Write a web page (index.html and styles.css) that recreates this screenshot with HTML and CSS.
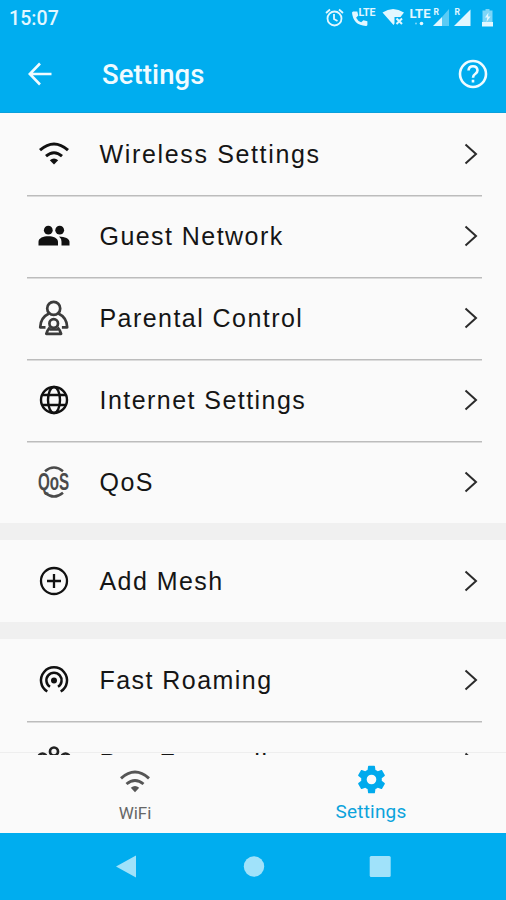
FILE: index.html
```html
<!DOCTYPE html>
<html lang="en">
<head>
<meta charset="utf-8">
<title>Settings</title>
<link rel="stylesheet" href="styles.css">
</head>
<body>
<div class="screen">
  <header class="top">
    <div class="status">
      <span class="clock">15:07</span>
      <svg class="status-icons" width="180" height="36" viewBox="320 0 180 36" fill="#e2f7ff">
        <g fill="none" stroke="#e2f7ff" stroke-width="1.8"><circle cx="334.500" cy="18.500" r="7"/><path d="M334 14v5l3.500 2M326 13l4-3.500M343 13l-4-3.500"/></g>
        <path d="M353 11.500h4.300l1 4-2.200 2.200q1.900 3.600 5.100 4.600l2.200-2 4 1v3.400q0 1.300-1.500 1.300Q353 25 352 12.500Z"/>
        <text class="badge" x="358.500" y="16" font-size="10" textLength="17" lengthAdjust="spacingAndGlyphs">LTE</text>
        <path d="M382.500 12.500Q393 5.500 404 12.500l-3.500 4.500h-6v6.500l-1 1.500Z"/><path d="M396.500 18.500l5.500 5.500m0-5.500l-5.500 5.500" stroke="#e2f7ff" stroke-width="2"/>
        <text class="badge" x="409.500" y="18" font-size="13.500" textLength="21" lengthAdjust="spacingAndGlyphs">LTE</text>
        <circle cx="416" cy="23.500" r=".9" opacity=".6"/><circle cx="421.500" cy="23.500" r="1.800"/>
        <text class="badge" x="433.500" y="14.500" font-size="8.500">R</text>
        <path d="M433 26l9-9v9Z"/><path d="M442 17l7-8v17h-7Z" opacity=".4"/>
        <text class="badge" x="454.500" y="14.500" font-size="8.500">R</text>
        <path d="M454 26l16.500-16.500V26Z"/>
        <path d="M485.500 9h4v1.500h3V22h-10V10.500h3Z" opacity=".55"/><path d="M482 22h11v4.500h-11ZM488.500 12.500l-3.500 5h2.300l-.8 4.500 4-5.500h-2.500Z"/>
      </svg>
    </div>
    <div class="appbar">
      <svg class="back" width="24" height="24" viewBox="0 0 24 24"><path d="M12 1.500L1.800 12 12 22.500M2 12h21.500"/></svg>
      <h1 class="title">Settings</h1>
      <svg class="help" width="30" height="30" viewBox="0 0 30 30"><circle cx="15" cy="15" r="13"/><path d="M10.500 11.500q.4-4.200 4.500-4.200t4.500 4q0 1.900-2.100 3.500Q15 16.500 15 18.700M15 20.700v2.800"/></svg>
    </div>
  </header>

  <main class="list">
    <section class="group">
      <div class="row"><svg class="icon" viewBox="0 0 36 36"><g fill="none" stroke="#111" stroke-width="3"><path d="M4 14.200Q18 1.800 32 14.200"/><path d="M10 20.200q8-6.800 16 0"/></g><path d="M13.800 24.200q4.200-3.200 8.400 0L18 28.500Z"/></svg><span class="label label-loose">Wireless Settings</span><svg class="chevron" viewBox="0 0 14 22"><path d="M1.500 1.500L12 11 1.500 20.500"/></svg></div>
      <div class="row"><svg class="icon" viewBox="0 0 36 36"><circle cx="12.300" cy="12.200" r="4.400"/><circle cx="23.700" cy="12.200" r="4.400"/><path d="M2.500 27.500v-3.700c0-7.300 19.500-7.300 19.500 0v3.700ZM23 18.400c6 .3 10.500 2 10.500 5.400v3.700h-8v-3.700q0-3.500-2.500-5.400Z"/></svg><span class="label">Guest Network</span><svg class="chevron" viewBox="0 0 14 22"><path d="M1.500 1.500L12 11 1.500 20.500"/></svg></div>
      <div class="row"><svg class="icon" viewBox="0 0 36 36"><g fill="none" stroke="#3b3b3b" stroke-width="2.700" stroke-linejoin="round"><circle cx="17.700" cy="8.400" r="6.500"/><path d="M13 13.500Q4.500 17.500 4.200 27.300h5.300M22.400 13.500Q30.900 17.500 31.200 27.300h-5.300"/><circle cx="17.700" cy="23.500" r="4.300"/><path d="M13.800 27.300q-2.500 2.800-3.500 6.500h14.800q-1-3.700-3.500-6.500M13.500 29.500h8.400"/></g></svg><span class="label">Parental Control</span><svg class="chevron" viewBox="0 0 14 22"><path d="M1.500 1.500L12 11 1.500 20.500"/></svg></div>
      <div class="row"><svg class="icon" viewBox="0 0 36 36"><g fill="none" stroke="#111" stroke-width="2.400"><circle cx="18" cy="18" r="13"/><ellipse cx="18" cy="18" rx="6" ry="13"/><path d="M6.500 13h23M6.500 23h23"/></g></svg><span class="label">Internet Settings</span><svg class="chevron" viewBox="0 0 14 22"><path d="M1.500 1.500L12 11 1.500 20.500"/></svg></div>
      <div class="row"><svg class="icon" viewBox="0 0 36 36"><g fill="none" stroke="#4a4a4a" stroke-width="2.500"><path d="M9 7.300q9-7.600 18 0M9 28.700q9 7.600 18 0"/></g><text class="qos" transform="translate(2 25.500) scale(.66 1)">QoS</text></svg><span class="label">QoS</span><svg class="chevron" viewBox="0 0 14 22"><path d="M1.500 1.500L12 11 1.500 20.500"/></svg></div>
    </section>
    <section class="group">
      <div class="row"><svg class="icon" viewBox="0 0 36 36"><g fill="none" stroke="#111" stroke-width="2.300"><circle cx="18" cy="18" r="13"/><path d="M18 11v14M11 18h14"/></g></svg><span class="label">Add Mesh</span><svg class="chevron" viewBox="0 0 14 22"><path d="M1.500 1.500L12 11 1.500 20.500"/></svg></div>
    </section>
    <section class="group">
      <div class="row"><svg class="icon" viewBox="0 0 36 36"><g fill="none" stroke="#111" stroke-width="2.500"><path d="M11.300 29.500a13 13 0 1 1 13.400 0"/><path d="M14 24.800a7.600 7.600 0 1 1 8 0"/></g><circle cx="18" cy="18.500" r="3"/></svg><span class="label">Fast Roaming</span><svg class="chevron" viewBox="0 0 14 22"><path d="M1.500 1.500L12 11 1.500 20.500"/></svg></div>
      <div class="row row-last"><svg class="icon" viewBox="0 0 36 36"><g fill="none" stroke="#222" stroke-width="2.700"><circle cx="18" cy="6.500" r="4"/><circle cx="6.500" cy="12.500" r="4"/><circle cx="29.500" cy="12.500" r="4"/><path d="M18 12v10M9 17l9 6 9-6"/></g></svg><span class="label">Port Forwarding</span><svg class="chevron" viewBox="0 0 14 22"><path d="M1.500 1.500L12 11 1.500 20.500"/></svg></div>
    </section>
  </main>

  <nav class="tabs">
    <div class="tab">
      <svg width="36" height="36" viewBox="0 0 36 36" fill="#555"><g fill="none" stroke="#555" stroke-width="2.900"><path d="M4 15.300Q18 2.700 32 15.300"/><path d="M9.500 21q8.500-7.200 17 0"/></g><path d="M13.800 24.700q4.200-3.200 8.400 0L18 29.200Z"/></svg>
      <span class="tab-label">WiFi</span>
    </div>
    <div class="tab tab-active">
      <svg width="33" height="33" viewBox="0 0 24 24"><path fill="#00aaed" d="M19.430 12.980c.04-.32.07-.64.07-.98s-.03-.66-.07-.98l2.110-1.650c.19-.15.24-.42.12-.64l-2-3.460c-.12-.22-.39-.3-.61-.22l-2.490 1c-.52-.4-1.080-.73-1.690-.98l-.38-2.650A.488.488 0 0 0 14 2h-4c-.25 0-.46.180-.49.420l-.38 2.650c-.61.250-1.170.590-1.690.980l-2.490-1c-.23-.09-.49 0-.61.220l-2 3.460c-.13.220-.07.490.12.640l2.110 1.650c-.04.320-.07.650-.07.980s.03.660.07.980l-2.110 1.650c-.19.150-.24.420-.12.640l2 3.460c.12.220.39.300.61.220l2.490-1c.52.400 1.080.730 1.690.980l.38 2.650c.03.240.24.420.49.420h4c.25 0 .46-.18.49-.42l.38-2.650c.61-.25 1.170-.59 1.690-.98l2.490 1c.23.090.49 0 .61-.22l2-3.460c.12-.22.07-.49-.12-.64zM12 15.500a3.500 3.500 0 1 1 0-7 3.500 3.500 0 0 1 0 7z"/></svg>
      <span class="tab-label">Settings</span>
    </div>
  </nav>

  <footer class="navbar">
    <svg width="24" height="26" viewBox="0 0 24 26"><path d="M1 12.500L21 1.500v22Z"/></svg>
    <svg width="24" height="26" viewBox="0 0 24 26"><circle cx="12" cy="12.500" r="10.200"/></svg>
    <svg width="24" height="26" viewBox="0 0 24 26"><rect x="1.700" y="2" width="21" height="21" rx="1.500"/></svg>
  </footer>
</div>
</body>
</html>
```
FILE: styles.css
```css
* { box-sizing: border-box; }
body { margin: 0; }
svg { display: block; flex: none; }

.screen {
  width: 506px;
  height: 900px;
  display: flex;
  flex-direction: column;
  overflow: hidden;
  background: #fafafa;
  font-family: Roboto, "Liberation Sans", sans-serif;
}

.top {
  flex: none;
  height: 113px;
  background: #00adef;
  border-bottom: 1px solid #0aa0dc;
  color: #f0fbff;
}
.status {
  height: 36px;
  display: flex;
  align-items: center;
  justify-content: space-between;
  padding: 0 6px 0 9px;
}
.clock { font-size: 19.5px; font-weight: 500; letter-spacing: 0.1px; color: #e2f7ff; }
.badge { font-family: Roboto, sans-serif; font-weight: 700; }

.appbar {
  height: 76px;
  display: flex;
  align-items: center;
  padding: 0 18px 0 28px;
}
.back, .help { fill: none; stroke: #f0fbff; stroke-width: 2.6; }
.title {
  flex: 1;
  margin: 2px 0 0 50px;
  font-size: 27.5px;
  font-weight: 500;
  letter-spacing: 0.1px;
  line-height: 32px;
}

.list {
  flex: none;
  height: 642px;
  overflow: hidden;
  display: flex;
  flex-direction: column;
  gap: 17px;
  background: #f0f0f0;
}
.group { flex: none; background: #fafafa; padding: 0 24px 0 27px; }
.group:last-child {
  background: linear-gradient(#eeeeee, #eeeeee) 0 113px / 100% 1px no-repeat #fafafa;
}
.row {
  height: 82px;
  display: flex;
  align-items: center;
  padding: 0 4px 0 9px;
}
.row + .row { background: linear-gradient(#bcbcbc, #bcbcbc) 0 0 / 100% 1.5px no-repeat; }
.row-last { padding-top: 2px; }
.icon { width: 36px; height: 36px; fill: #111; }
.qos {
  font-family: "Liberation Sans", sans-serif;
  font-size: 23px;
  font-weight: 700;
  fill: #4a4a4a;
}
.label {
  flex: 1;
  margin-left: 27.5px;
  font-family: "Liberation Sans", Arial, sans-serif;
  font-size: 25px;
  letter-spacing: 1.45px;
  white-space: nowrap;
  color: #151515;
}
.label-loose { letter-spacing: 1.65px; }
.chevron { width: 14px; height: 22px; fill: none; stroke: #2b2b2b; stroke-width: 2; }

.tabs {
  flex: none;
  height: 78px;
  display: flex;
  justify-content: space-between;
  padding: 8px 17px 0 17px;
}
.tab {
  width: 236px;
  display: flex;
  flex-direction: column;
  align-items: center;
  color: #666;
  font-size: 17px;
}
.tab-label { line-height: 22px; margin-top: 3px; }
.tab-active { color: #0ba3dc; font-size: 19px; }
.tab-active .tab-label { margin-top: 5px; letter-spacing: 0.2px; }

.navbar {
  flex: none;
  height: 67px;
  display: flex;
  align-items: center;
  justify-content: space-between;
  padding: 0 114px 0 115px;
  background: #00adef;
  fill: #a0e2fa;
}
```
